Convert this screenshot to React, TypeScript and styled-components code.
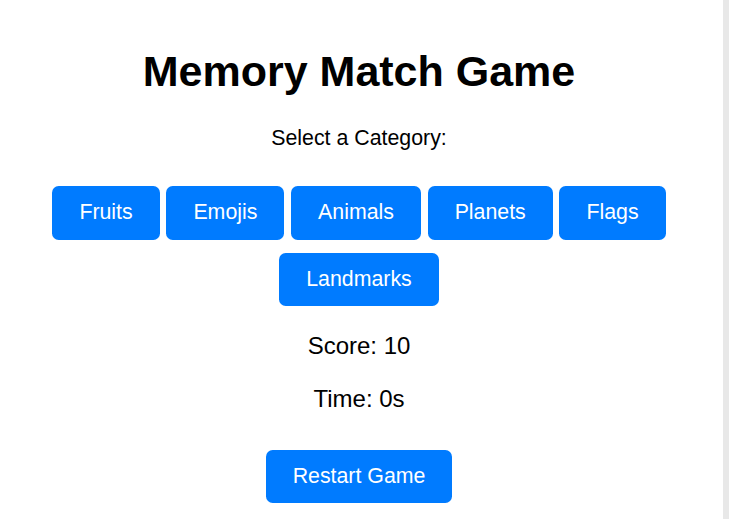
import React from "react";
import styled, { createGlobalStyle } from "styled-components";

const GlobalStyle = createGlobalStyle`
  html, body {
    margin: 0;
    padding: 0;
    background: #e8e8e8;
  }
  body {
    font-family: "Liberation Sans", Arial, sans-serif;
    color: #000;
  }
`;

const Page = styled.div`
  width: 723px;
  min-height: 100vh;
  background: #ffffff;
  box-sizing: border-box;
  padding: 47px 5px 16px 0;
  display: flex;
  flex-direction: column;
  align-items: center;
`;

const Title = styled.h1`
  margin: 0;
  font-size: 43px;
  font-weight: 700;
  line-height: normal;
`;

const Label = styled.p`
  margin: 30px 0 0;
  font-size: 21.33px;
  line-height: normal;
`;

const CategoryGrid = styled.div`
  margin-top: 35px;
  display: flex;
  flex-wrap: wrap;
  justify-content: center;
  gap: 13px 6.5px;
  width: 100%;
`;

const Button = styled.button`
  font-family: "Liberation Sans", Arial, sans-serif;
  font-size: 21.33px;
  line-height: normal;
  padding: 14.25px 27.1px;
  border: none;
  border-radius: 6.7px;
  background: #007bff;
  color: #ffffff;
  cursor: pointer;
`;

const Stat = styled.p<{ $top: number }>`
  margin: ${(p) => p.$top}px 0 0;
  font-size: 24px;
  line-height: normal;
`;

const RestartButton = styled(Button)`
  margin-top: 36.5px;
`;

const categories = ["Fruits", "Emojis", "Animals", "Planets", "Flags", "Landmarks"];

export default function App() {
  return (
    <>
      <GlobalStyle />
      <Page>
        <Title>Memory Match Game</Title>
        <Label>Select a Category:</Label>
        <CategoryGrid>
          {categories.map((c) => (
            <Button key={c}>{c}</Button>
          ))}
        </CategoryGrid>
        <Stat $top={25.6}>Score: 10</Stat>
        <Stat $top={25.7}>Time: 0s</Stat>
        <RestartButton>Restart Game</RestartButton>
      </Page>
    </>
  );
}
